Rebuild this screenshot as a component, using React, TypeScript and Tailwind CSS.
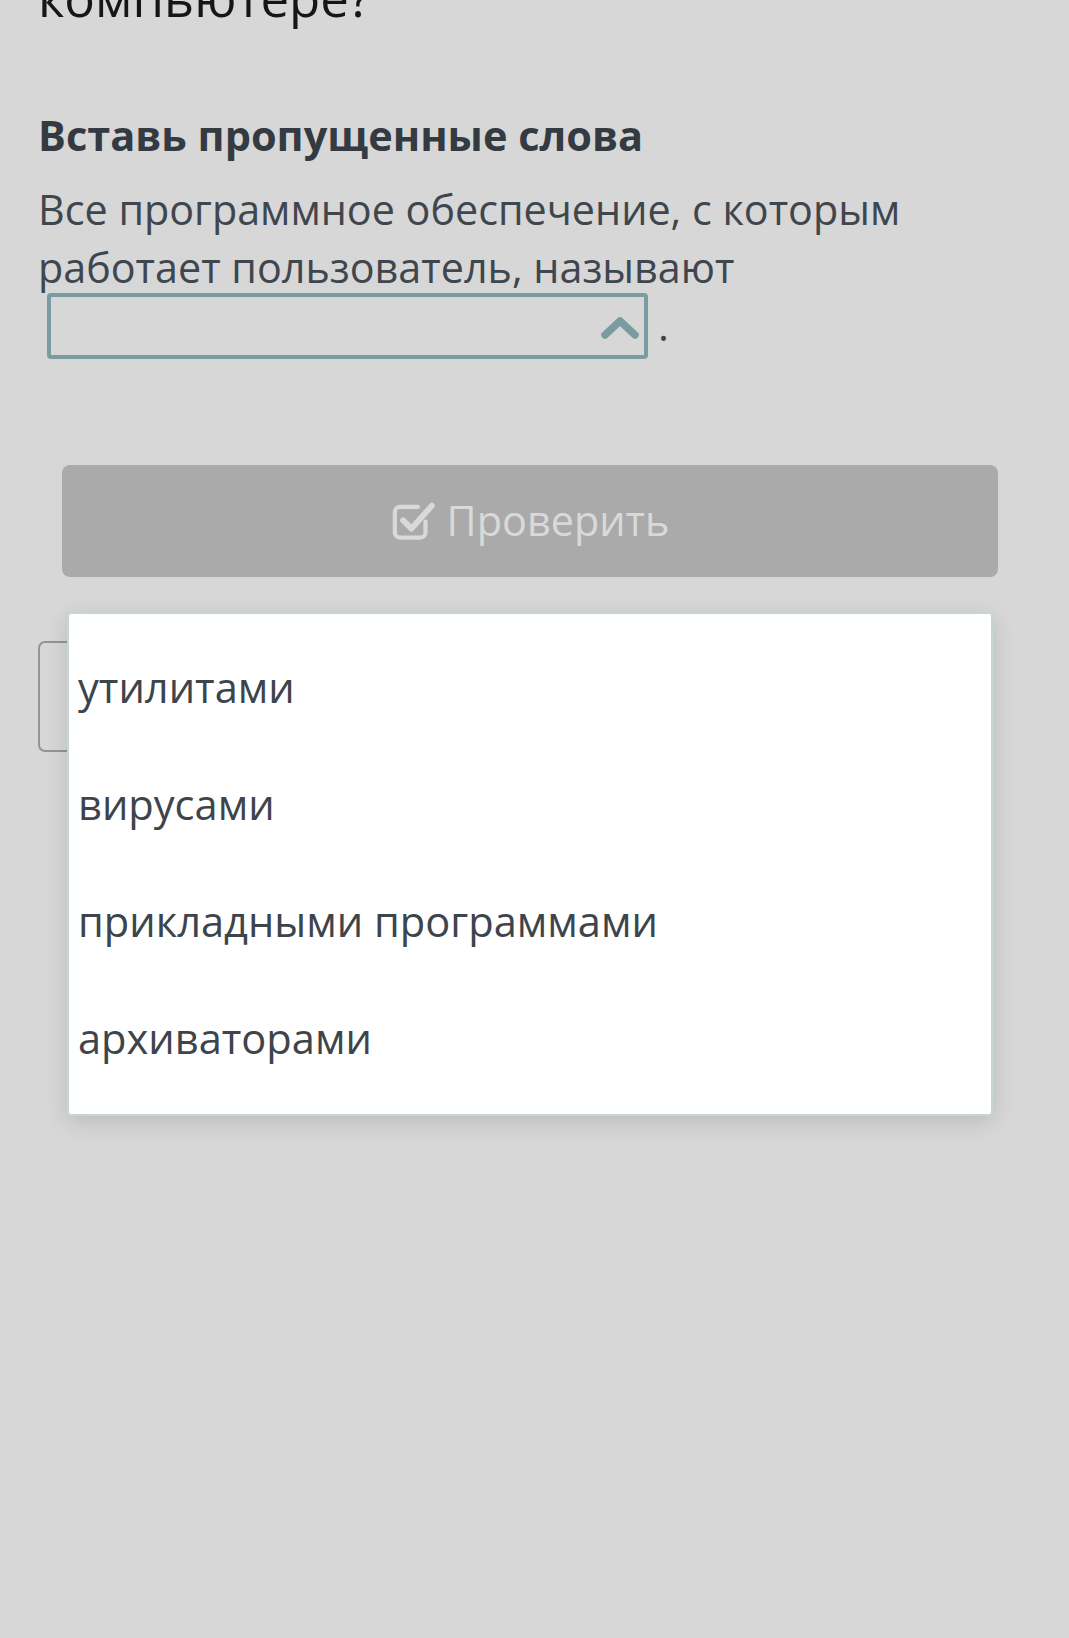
import React from "react";

function CheckSquare() {
  return (
    <svg width="46" height="46" viewBox="0 0 36 36" fill="none">
      <path
        d="M27 18.5V27a4 4 0 0 1-4 4H7a4 4 0 0 1-4-4V11a4 4 0 0 1 4-4h14"
        stroke="#d9d9d9"
        strokeWidth="3.3"
        strokeLinecap="round"
      />
      <path
        d="M9.5 17.5l6.5 6.5L32 6"
        stroke="#d9d9d9"
        strokeWidth="4.6"
        strokeLinecap="round"
        strokeLinejoin="round"
      />
    </svg>
  );
}

export default function App() {
  const items = ["утилитами", "вирусами", "прикладными программами", "архиваторами"];
  return (
    <div
      className="relative min-h-[1638px] w-full overflow-hidden bg-[#d7d7d7]"
      style={{ fontFamily: '"Open Sans", "Noto Sans", sans-serif' }}
    >
      <div className="px-[38px]">
        <div className="-mt-[32px] text-[51px] leading-[58px] text-[#161616]">компьютере?</div>
        <h2 className="mt-[80px] text-[41.5px] font-bold leading-[58px] text-[#343a41]">
          Вставь пропущенные слова
        </h2>
        <p className="mt-[16px] text-[41.3px] leading-[58px] text-[#40464d]">
          Все программное обеспечение, с которым работает пользователь, называют
          <span className="relative ml-[9px] mr-[10px] -mt-[4px] inline-block h-[66px] w-[601px] rounded-[4px] border-[4px] border-[#7a9ca1] align-[-18px]">
            <svg
              className="absolute right-[4px] top-[18px]"
              width="40"
              height="26"
              viewBox="0 0 40 26"
              fill="none"
            >
              <path
                d="M5 20L20 6l15 14"
                stroke="#7a9ca1"
                strokeWidth="7.5"
                strokeLinecap="round"
                strokeLinejoin="round"
              />
            </svg>
          </span>
          .
        </p>
        <button
          type="button"
          className="ml-[24px] mt-[106px] flex h-[112px] w-[936px] items-center justify-center gap-[10px] rounded-[8px] bg-[#aaaaaa] text-[41.4px] leading-none text-[#d9d9d9]"
        >
          <CheckSquare />
          <span>Проверить</span>
        </button>
        <div className="mt-[64px] h-[111px] w-[600px] rounded-[7px] border-2 border-[#8f9699]" />
      </div>

      <div className="absolute left-[67px] top-[612px] w-[926px] rounded-[4px] border-[2.5px] border-[#c6d6d8] bg-white pb-[17px] pt-[15px] shadow-[0_6px_22px_rgba(0,0,0,0.13)]">
        {items.map((t) => (
          <div key={t} className="h-[117px] pl-[9px] text-[41.6px] leading-[117px] text-[#3e444b]">
            {t}
          </div>
        ))}
      </div>
    </div>
  );
}
